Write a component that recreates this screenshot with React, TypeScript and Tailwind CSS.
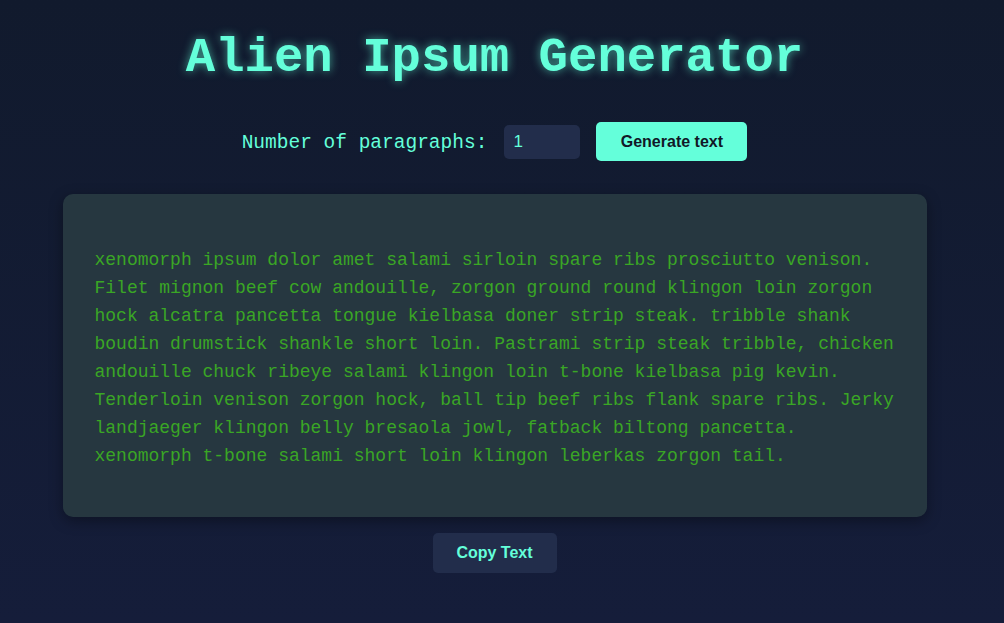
import { useState } from 'react'

const sample =
  'xenomorph ipsum dolor amet salami sirloin spare ribs prosciutto venison. Filet mignon beef cow andouille, zorgon ground round klingon loin zorgon hock alcatra pancetta tongue kielbasa doner strip steak. tribble shank boudin drumstick shankle short loin. Pastrami strip steak tribble, chicken andouille chuck ribeye salami klingon loin t-bone kielbasa pig kevin. Tenderloin venison zorgon hock, ball tip beef ribs flank spare ribs. Jerky landjaeger klingon belly bresaola jowl, fatback biltong pancetta. xenomorph t-bone salami short loin klingon leberkas zorgon tail.'

export default function App() {
  const [count, setCount] = useState(1)

  return (
    <div className="min-h-[623px] w-full bg-gradient-to-b from-[#111a2d] to-[#151d3a]">
      <div className="w-[989px] flex flex-col items-center">
        <h1 className="mt-[27px] font-['Liberation_Mono','DejaVu_Sans_Mono',monospace] text-[49px] leading-[62px] font-bold text-[#64ffda] [text-shadow:0_0_10px_rgba(100,255,218,0.6)]">
          Alien Ipsum Generator
        </h1>

        <div className="mt-[33px] flex items-center">
          <label className="mt-[5px] font-['Liberation_Mono','DejaVu_Sans_Mono',monospace] text-[19.5px] text-[#64ffda]">
            Number of paragraphs:
          </label>
          <input
            type="number"
            min={1}
            value={count}
            onChange={(e) => setCount(parseInt(e.target.value) || 1)}
            className="ml-[17px] w-[76px] h-[34px] rounded-[5px] bg-[#222d4b] px-[9px] font-['Liberation_Sans',Arial,sans-serif] text-[17px] text-[#64ffda] outline-none [appearance:textfield] [&::-webkit-inner-spin-button]:appearance-none"
          />
          <button className="ml-[16px] w-[151px] h-[39px] rounded-[5px] bg-[#64ffda] font-['Liberation_Sans',Arial,sans-serif] text-[16px] font-bold text-[#111827]">
            Generate text
          </button>
        </div>

        <div className="mt-[33px] w-[864px] rounded-[10px] bg-[#263740] px-8 pt-[52px] pb-[47px] shadow-[0_4px_14px_rgba(0,0,0,0.35)]">
          <p className="font-['Liberation_Mono','DejaVu_Sans_Mono',monospace] text-[18px] leading-[28px] text-[#3aa625]">
            {sample}
          </p>
        </div>

        <button className="mt-[16px] w-[124px] h-[40px] rounded-[5px] bg-[#222d4b] font-['Liberation_Sans',Arial,sans-serif] text-[16px] font-bold text-[#64ffda]">
          Copy Text
        </button>
      </div>
    </div>
  )
}
